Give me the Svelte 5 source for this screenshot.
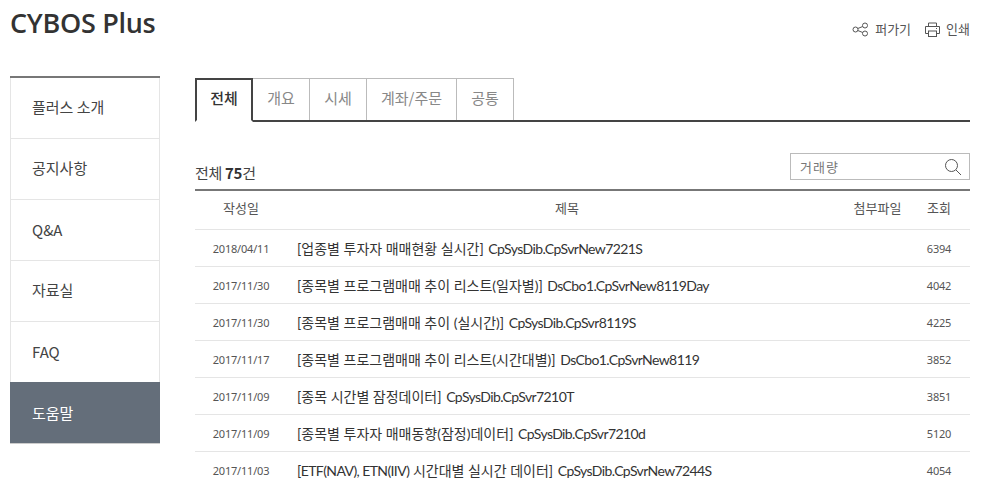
<script>
  const menu = ['플러스 소개', '공지사항', 'Q&A', '자료실', 'FAQ', '도움말'];
  const tabs = ['전체', '개요', '시세', '계좌/주문', '공통'];
  const rows = [
    { date: '2018/04/11', head: '[업종별 투자자 매매현황 실시간]', code: 'CpSysDib.CpSvrNew7221S', views: 6394 },
    { date: '2017/11/30', head: '[종목별 프로그램매매 추이 리스트(일자별)]', code: 'DsCbo1.CpSvrNew8119Day', views: 4042 },
    { date: '2017/11/30', head: '[종목별 프로그램매매 추이 (실시간)]', code: 'CpSysDib.CpSvr8119S', views: 4225 },
    { date: '2017/11/17', head: '[종목별 프로그램매매 추이 리스트(시간대별)]', code: 'DsCbo1.CpSvrNew8119', views: 3852 },
    { date: '2017/11/09', head: '[종목 시간별 잠정데이터]', code: 'CpSysDib.CpSvr7210T', views: 3851 },
    { date: '2017/11/09', head: '[종목별 투자자 매매동향(잠정)데이터]', code: 'CpSysDib.CpSvr7210d', views: 5120 },
    { date: '2017/11/03', lead: '[ETF(NAV), ETN(IIV)', head: '시간대별 실시간 데이터]', code: 'CpSysDib.CpSvrNew7244S', views: 4054 }
  ];
</script>

<div class="page">
  <header class="top">
    <h1>CYBOS Plus</h1>
    <div class="tools">
      <span class="tool">
        <svg width="17" height="15" viewBox="0 0 17 15" fill="none" stroke="#555" stroke-width="1">
          <circle cx="3.5" cy="7.5" r="2.5"></circle>
          <circle cx="13" cy="3.5" r="2.5"></circle>
          <circle cx="13" cy="11.5" r="2.5"></circle>
          <line x1="5.8" y1="6.5" x2="10.7" y2="4.5"></line>
          <line x1="5.8" y1="8.5" x2="10.7" y2="10.5"></line>
        </svg>
        퍼가기
      </span>
      <span class="tool">
        <svg width="15" height="15" viewBox="0 0 15 15" fill="none" stroke="#555" stroke-width="1">
          <path d="M3.5 4.5v-3.5h8v3.5"></path>
          <path d="M3.5 11.5h-3v-7h14v7h-3"></path>
          <rect x="3.5" y="9" width="8" height="5.5"></rect>
          <line x1="11" y1="6.5" x2="12" y2="6.5"></line>
        </svg>
        인쇄
      </span>
    </div>
  </header>

  <div class="body">
    <nav class="side">
      {#each menu as item, i}
        <div class="side-item" class:en={/^[A-Z]/.test(item)} class:active={i === 5}>{item}</div>
      {/each}
    </nav>

    <main class="content">
      <div class="tabs">
        {#each tabs as tab, i}
          <div class="tab" class:on={i === 0}>{tab}</div>
        {/each}
      </div>

      <div class="list-bar">
        <div class="count">전체 <b>75</b>건</div>
        <div class="search">
          <span>거래량</span>
          <svg width="18" height="18" viewBox="0 0 18 18" fill="none" stroke="#555" stroke-width="1">
            <circle cx="7.5" cy="7.5" r="6"></circle>
            <line x1="12" y1="12" x2="17" y2="17"></line>
          </svg>
        </div>
      </div>

      <table>
        <thead>
          <tr>
            <th class="c-date">작성일</th>
            <th>제목</th>
            <th class="c-file">첨부파일</th>
            <th class="c-view">조회</th>
          </tr>
        </thead>
        <tbody>
          {#each rows as row}
            <tr>
              <td class="date">{row.date}</td>
              <td class="title">
                {#if row.lead}<span class="latin">{row.lead}</span>{/if}
                {row.head}
                <span class="latin code">{row.code}</span>
              </td>
              <td></td>
              <td class="view">{row.views}</td>
            </tr>
          {/each}
        </tbody>
      </table>
    </main>
  </div>
</div>

<style>
  :global(body) {
    background: #fff;
    overflow: hidden;
  }

  .page {
    width: 987px;
    height: 488px;
    overflow: hidden;
    padding: 0 17px 0 10px;
    box-sizing: border-box;
    font-family: "Noto Sans CJK KR", "Noto Sans", sans-serif;
    color: #333;
  }

  .top {
    height: 76px;
    display: flex;
    justify-content: space-between;
    align-items: flex-start;
  }

  h1 {
    margin: 4px 0 0;
    font-family: "Open Sans", "Noto Sans CJK KR", sans-serif;
    font-size: 27px;
    line-height: 38px;
    font-weight: 600;
    letter-spacing: -0.3px;
    color: #333;
  }

  .tools {
    display: flex;
    gap: 14px;
    margin-top: 20px;
    font-size: 13px;
    line-height: 18px;
    color: #555;
  }

  .tool {
    display: flex;
    align-items: center;
    gap: 6px;
  }

  .body {
    display: flex;
    gap: 35px;
    align-items: flex-start;
  }

  .side {
    width: 150px;
    flex: none;
    border-top: 2px solid #777;
    box-sizing: border-box;
  }

  .side-item {
    height: 61px;
    box-sizing: border-box;
    padding: 0 0 4px 21px;
    display: flex;
    align-items: center;
    font-size: 15px;
    color: #444;
    border: 1px solid #e5e5e5;
    border-top: none;
  }

  .side-item.en {
    padding-bottom: 2px;
  }

  .side-item.active {
    height: 62px;
    margin-top: -1px;
    background: #646e7a;
    color: #fff;
    border: none;
    border-bottom: 1px solid #ccc;
    padding: 0 0 0 22px;
  }

  .content {
    flex: 1;
    min-width: 0;
  }

  .tabs {
    display: flex;
    height: 44px;
    margin-top: 2px;
    box-sizing: border-box;
    border-bottom: 2px solid #444;
  }

  .tab {
    height: 42px;
    min-width: 57px;
    box-sizing: border-box;
    padding: 0 14px 4px;
    display: flex;
    align-items: center;
    justify-content: center;
    font-size: 15px;
    color: #888;
    border: 1px solid #bbb;
    border-left: none;
    border-bottom: none;
  }

  .tab.on {
    height: 44px;
    width: 58px;
    min-width: 58px;
    padding: 0 0 6px;
    color: #333;
    font-weight: 500;
    background: #fff;
    border: 2px solid #444;
    border-bottom: 2px solid #fff;
  }

  .list-bar {
    height: 67px;
    box-sizing: border-box;
    display: flex;
    justify-content: space-between;
    align-items: flex-end;
    padding-bottom: 9px;
  }

  .count {
    margin-bottom: -3px;
    font-size: 15px;
    line-height: 20px;
    letter-spacing: -0.3px;
    color: #444;
  }

  .count b {
    font-weight: 700;
    color: #333;
  }

  .search {
    width: 180px;
    height: 27px;
    box-sizing: border-box;
    border: 1px solid #bbb;
    display: flex;
    align-items: center;
    justify-content: space-between;
    padding: 0 7px 0 9px;
    font-size: 13px;
    color: #777;
    letter-spacing: 1px;
  }

  table {
    width: 100%;
    border-collapse: collapse;
    table-layout: fixed;
    border-top: 2px solid #777;
  }

  th {
    height: 33px;
    padding: 0 0 5px;
    font-size: 13px;
    font-weight: 400;
    color: #555;
    border-bottom: 1px solid #e5e5e5;
  }

  td {
    height: 36px;
    padding: 0;
    border-bottom: 1px solid #e5e5e5;
    font-size: 14px;
    color: #333;
  }

  .c-date { width: 92px; }
  .c-file { width: 61px; }
  .c-view { width: 62px; }

  .date, .view {
    text-align: center;
    font-family: "Noto Sans", sans-serif;
    font-size: 11px;
    color: #555;
    letter-spacing: -0.2px;
  }

  .title {
    padding-left: 10px;
    white-space: nowrap;
    font-family: "Lato", "Noto Sans CJK KR", sans-serif;
  }

  .latin {
    font-family: "Lato", "Noto Sans", sans-serif;
    letter-spacing: -0.6px;
  }

  .code {
    margin-left: 1px;
  }
</style>
